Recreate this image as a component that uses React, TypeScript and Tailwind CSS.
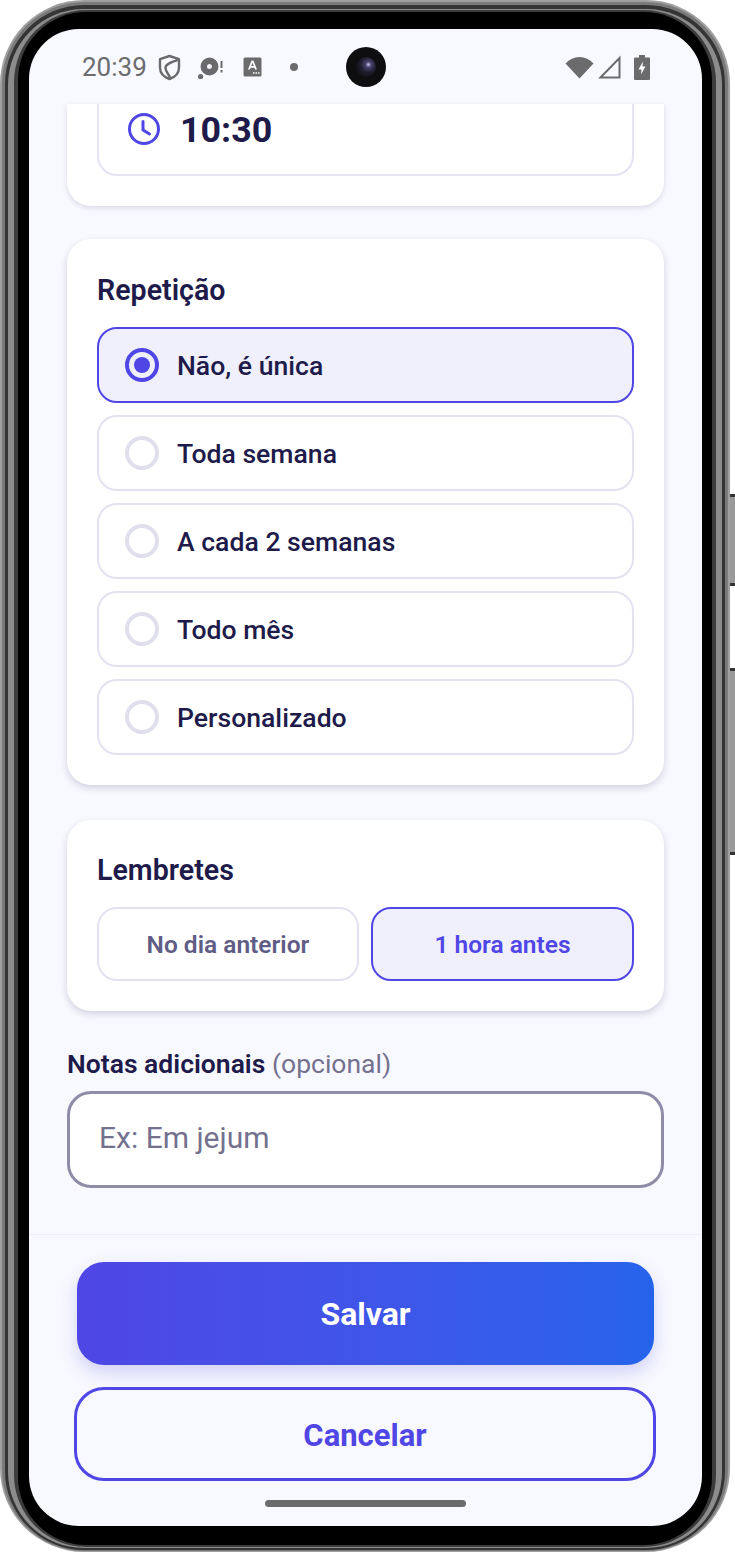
import { useState } from "react";

const repeatOptions = ["Não, é única", "Toda semana", "A cada 2 semanas", "Todo mês", "Personalizado"];

function ShieldIcon() {
  return (
    <svg width="23" height="27" viewBox="0 0 23 27" fill="none" stroke="#6b6b6e" strokeWidth="2.4" strokeLinejoin="round">
      <path d="M11.500 2 21 5.200v8.300c0 5.400-3.900 9.600-9.500 11.500C5.900 23.100 2 18.900 2 13.500V5.200z" />
      <path d="M20 6C14 8 7.500 10 7.500 14c0 4 3.500 6 5 10.500" />
    </svg>
  );
}

function DiscIcon() {
  return (
    <svg width="25" height="25" viewBox="0 0 25 25" fill="#6b6b6e">
      <path fillRule="evenodd" d="M11.500 2.500a9 9 0 1 1 0 18 9 9 0 0 1 0-18zm0 6.500a2.500 2.500 0 1 0 0 5 2.500 2.500 0 0 0 0-5z" />
      <circle cx="2.600" cy="21.500" r="2.600" />
      <rect x="22.500" y="6" width="2" height="7" />
      <rect x="22.500" y="15" width="2" height="2.500" />
    </svg>
  );
}

function FontBadgeIcon() {
  return (
    <svg width="19" height="20" viewBox="0 0 19 20">
      <rect width="18" height="19" x="0.500" y="0.500" rx="1.500" fill="#6b6b6e" />
      <path d="M5 12.500 8.600 3.500h1.800l3.600 9h-2l-.6-1.700H7.600L7 12.500zM8.200 9.100h2.600L9.500 5.800z" fill="#fff" />
      <path d="M10 15.200h1.500v1.500H10zm2.500 0H14v1.500h-1.500zm2.500 0h1.500v1.500H15z" fill="#fff" />
    </svg>
  );
}

function WifiIcon() {
  return (
    <svg width="29" height="24" viewBox="0 0 29 24" fill="#6b6b6e">
      <path d="M.500 8.500C4.300 4.300 9 2 14.500 2s10.200 2.300 14 6.500L14.500 23.500z" />
    </svg>
  );
}

function SignalIcon() {
  return (
    <svg width="23" height="24" viewBox="0 0 23 24" fill="none" stroke="#6b6b6e" strokeWidth="2">
      <path d="M21.500 3v19.500H2.500z" strokeLinejoin="miter" />
    </svg>
  );
}

function BatteryIcon() {
  return (
    <svg width="16" height="25" viewBox="0 0 16 25">
      <path d="M5 0h6v2.500h4a1 1 0 0 1 1 1V24a1 1 0 0 1-1 1H1a1 1 0 0 1-1-1V3.500a1 1 0 0 1 1-1h4z" fill="#6b6b6e" />
      <path d="M9 6.500 4.500 14.500H7.500L7 19.500 11.500 11.500H8.500z" fill="#fff" />
    </svg>
  );
}

function ClockIcon() {
  return (
    <svg width="34" height="34" viewBox="0 0 34 34" fill="none" stroke="#4f46e5" strokeWidth="3" strokeLinecap="round" strokeLinejoin="round">
      <circle cx="17" cy="17" r="14.500" />
      <path d="M16 9.500V18l6.500 4" />
    </svg>
  );
}

function StatusBar() {
  return (
    <div className="flex h-[75px] shrink-0 items-center justify-between pl-[53px] pr-[52px] pt-[1px]">
      <div className="flex w-[216px] items-center">
        <span className="w-[76px] text-[26px] leading-none text-[#6b6b6e]">20:39</span>
        <ShieldIcon />
        <span className="ml-[17px] flex"><DiscIcon /></span>
        <span className="ml-[20px] flex"><FontBadgeIcon /></span>
        <span className="ml-[28px] size-[8px] rounded-full bg-[#6b6b6e]" />
      </div>
      <div className="flex size-[40px] items-center justify-center rounded-full bg-[#0e0e11]">
        <div className="size-[20px] rounded-full bg-[radial-gradient(circle_at_62%_38%,#c9c6ec_0%,#4a4370_16%,#1d1c2a_45%,#0e0e11_85%)]" />
      </div>
      <div className="flex w-[216px] items-center justify-end gap-[4px]">
        <WifiIcon />
        <SignalIcon />
        <span className="ml-[9px] flex"><BatteryIcon /></span>
      </div>
    </div>
  );
}

export default function App() {
  const [repeat, setRepeat] = useState(repeatOptions[0]);
  const [reminder, setReminder] = useState("1 hora antes");

  return (
    <div className="relative h-[1553px] w-[735px] overflow-hidden bg-white [font-family:Roboto,sans-serif]">
      <div className="absolute right-0 top-[494px] h-[92px] w-[5px] border-y-[3px] border-y-[#333] bg-[#9a9a9a]" />
      <div className="absolute right-0 top-[668px] h-[187px] w-[5px] border-y-[3px] border-y-[#333] bg-[#9a9a9a]" />

      {/* phone body */}
      <div className="h-[1552px] w-[730px] rounded-[84px] bg-[#a0a0a0] px-[2px] pb-[1px] pt-[2px]">
        <div className="h-full rounded-[82px] bg-[#7a7a7a] px-[3px] pb-[1px] pt-[3px]">
          <div className="h-full rounded-[79px] bg-[#343434] px-[3px] pb-[2px] pt-[4px]">
            <div className="h-full rounded-[76px] bg-[#8c8c8c] px-[6px] pb-[1px] pt-[1px]">
              <div className="h-full rounded-[72px] bg-[#3c3c3c] px-[4px] pb-[2px] pt-[2px]">
                <div className="h-full rounded-[68px] bg-black pb-[19px] pl-[11px] pr-[10px] pt-[17px]">
                  <div className="flex h-full flex-col overflow-hidden rounded-[50px] bg-[#f8f9fe] text-[#1e1b4b]">
                    <StatusBar />

                    <div className="flex h-[1130px] shrink-0 flex-col px-[38px]">
                      <section className="rounded-b-[24px] bg-white px-[30px] pb-[30px] shadow-[0_2px_5px_rgba(30,27,75,0.14)]">
                        <div className="flex h-[72px] items-start rounded-b-[20px] border-x-2 border-b-2 border-[#e4e2f3] pl-[28px] pt-[8px]">
                          <ClockIcon />
                          <span className="ml-[19px] text-[35.800px] font-bold leading-[36px]">10:30</span>
                        </div>
                      </section>

                      <section className="mt-[33px] rounded-[24px] bg-white px-[30px] pb-[30px] pt-[33px] shadow-[0_3px_7px_rgba(30,27,75,0.18)]">
                        <h2 className="text-[28.600px] font-semibold leading-[36px]">Repetição</h2>
                        <div className="mt-[19px] flex flex-col gap-[12px]">
                          {repeatOptions.map((option) => {
                            const active = option === repeat;
                            return (
                              <button
                                key={option}
                                onClick={() => setRepeat(option)}
                                className={`flex h-[76px] items-center rounded-[20px] border-2 pl-[26px] text-left ${active ? "border-[#4f46e5] bg-[#f0f0fc]" : "border-[#e4e2f0] bg-white"}`}
                              >
                                <span className={`flex size-[34px] items-center justify-center rounded-full border-[4px] ${active ? "border-[#4f46e5]" : "border-[#e0dfec]"}`}>
                                  {active && <span className="size-[16px] rounded-full bg-[#4f46e5]" />}
                                </span>
                                <span className="ml-[18px] mt-[2px] text-[26.600px] font-medium leading-none">{option}</span>
                              </button>
                            );
                          })}
                        </div>
                      </section>

                      <section className="mt-[35px] rounded-[24px] bg-white px-[30px] pb-[30px] pt-[32px] shadow-[0_3px_7px_rgba(30,27,75,0.18)]">
                        <h2 className="text-[28.600px] font-semibold leading-[36px]">Lembretes</h2>
                        <div className="mt-[19px] grid grid-cols-[262px_1fr] gap-[12px]">
                          {["No dia anterior", "1 hora antes"].map((label) => {
                            const active = label === reminder;
                            return (
                              <button
                                key={label}
                                onClick={() => setReminder(label)}
                                className={`h-[74px] rounded-[20px] border-2 pt-[3px] text-[24.500px] font-semibold ${active ? "border-[#4f46e5] bg-[#f0f0fc] text-[#4f46e5]" : "border-[#e4e2f0] bg-white text-[#5f5c85]"}`}
                              >
                                {label}
                              </button>
                            );
                          })}
                        </div>
                      </section>

                      <label className="mt-[35px] text-[26.500px] font-semibold leading-[36px]">
                        Notas adicionais <span className="font-normal text-[#74718f]">(opcional)</span>
                      </label>
                      <input
                        placeholder="Ex: Em jejum"
                        className="mt-[9px] h-[97px] w-full rounded-[24px] border-[3px] border-[#8f8ca8] bg-white pb-[5px] pl-[29px] pr-[30px] text-[30px] outline-none placeholder:text-[#74718f]"
                      />
                    </div>

                    <div className="flex flex-1 flex-col items-center border-t border-[#eeeff6] pt-[27px]">
                      <button className="h-[103px] w-[577px] rounded-[27px] bg-gradient-to-r from-[#4f46e5] to-[#2563eb] text-[32px] font-bold text-white shadow-[0_8px_18px_rgba(79,70,229,0.22)]">
                        Salvar
                      </button>
                      <button className="ml-[45px] mt-[22px] h-[94px] w-[582px] self-start rounded-[30px] border-[3px] border-[#4f46e5] pt-[4px] text-[31px] font-bold text-[#4f46e5]">
                        Cancelar
                      </button>
                      <div className="mt-[19px] h-[7px] w-[201px] rounded-full bg-[#6b6b6e]" />
                    </div>
                  </div>
                </div>
              </div>
            </div>
          </div>
        </div>
      </div>
    </div>
  );
}
